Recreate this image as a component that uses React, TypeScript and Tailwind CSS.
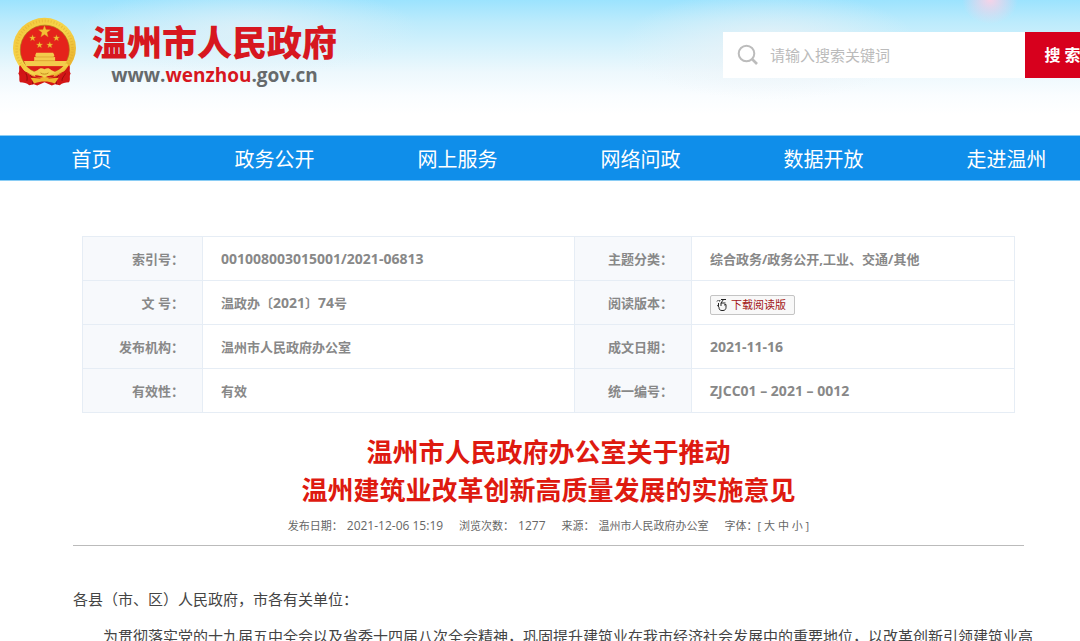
import React from "react";

const navItems = ["首页", "政务公开", "网上服务", "网络问政", "数据开放", "走进温州"];

function Emblem() {
  const star = (cx: number, cy: number, r: number) =>
    Array.from({ length: 10 }, (_, i) => {
      const a = -Math.PI / 2 + (i * Math.PI) / 5;
      const d = i % 2 ? r * 0.42 : r;
      return `${(cx + d * Math.cos(a)).toFixed(1)},${(cy + d * Math.sin(a)).toFixed(1)}`;
    }).join(" ");
  return (
    <svg viewBox="36 20 196 210" className="h-[70px] w-[65px] shrink-0" role="img" aria-label="国徽">
      <defs>
        <linearGradient id="gold" x1="0" y1="0" x2="1" y2="1">
          <stop offset="0" stopColor="#f3c53a" />
          <stop offset="0.5" stopColor="#f6d64c" />
          <stop offset="1" stopColor="#e6a524" />
        </linearGradient>
      </defs>
      <path
        d="M60 162c10 4 20 10 30 16l44 16 44-16c10-6 20-12 30-16 5 9-1 19 5 28-6 7 1 18-5 26-12 1-20 2-28 9l-14-3-10 4-22-10-22 10-10-4-14 3c-8-7-16-8-28-9-4-8 1-19-5-26 6-9 0-19 5-28z"
        fill="#d31616"
      />
      <path d="M73 184c8 8 10 16 8 28M195 184c8 8-10 16-8 28M90 192c8 10 10 18 8 30M178 192c-8 10-10 18-8 30" fill="none" stroke="#920c0c" strokeWidth="3" />
      <ellipse cx="134" cy="113" rx="95" ry="91" fill="url(#gold)" />
      <circle cx="134" cy="115" r="84" fill="none" stroke="#dca52a" strokeWidth="8" strokeDasharray="3 6" opacity="0.45" />
      <circle cx="135" cy="118" r="74" fill="#e5231b" stroke="#a9781a" strokeWidth="2" />
      <g fill="#f5bf35" stroke="#c98a1c" strokeWidth="1">
        <polygon points={star(134, 64, 19)} />
        <polygon points={star(98, 83, 10)} />
        <polygon points={star(170, 83, 10)} />
        <polygon points={star(119, 104, 10)} />
        <polygon points={star(150, 104, 10)} />
      </g>
      <path d="M109 127h51l4 8-3 5h5v12h36l-8 17H79l-7-17h31v-12h5l-2-5z" fill="#f3cb4c" />
      <path d="M106 140h58M104 151h62" stroke="#d69a2a" strokeWidth="2" />
      <path d="M79 168h112l-18 11h-18l-20-5-20 5H96z" fill="#d91d18" />
      <path d="M60 164c-3 8 0 18 3 24l22 2 28 12h42l28-12 22-2c3-6 6-16 3-24l-14 20-34 11-26 4-26-4-34-11z" fill="#cf1515" />
      <path d="M68 160c12 14 26 24 44 28l-8 10c-18-7-31-18-42-33zM200 160c-12 14-26 24-44 28l8 10c18-7 31-18 42-33z" fill="url(#gold)" />
      <path d="M92 203l28 2 14-6 14 6 29-2-12 17c-12-4-20-6-31-6s-19 2-31 6z" fill="#edb62f" />
      <path d="M114 179c6-7 14-6 20-2 6-4 14-5 20 2l14 7-18 9-16 7-16-7-18-9z" fill="#f3ce4d" />
      <path d="M122 188c6 5 18 5 24 0" fill="none" stroke="#c48a1d" strokeWidth="3" />
    </svg>
  );
}

function Num({ children }: { children: React.ReactNode }) {
  return <span className="text-[14px]">{children}</span>;
}

function DownloadButton() {
  return (
    <button
      type="button"
      className="mt-1 flex h-5 w-[85px] items-center gap-1 rounded-xs border border-[#c4c4c4] bg-[#f8f8f8] pl-[5px] text-[11px] font-normal whitespace-nowrap text-[#a31515]"
    >
      <svg viewBox="0 0 11 13" className="h-[13px] w-[11px] shrink-0" fill="none" stroke="#222" strokeWidth="1" aria-hidden="true">
        <path d="M1 3.500 2.500 2M4 2l-.5 1.500M5 1.500h5M7.500 1.500 5 5h4.500M2.500 5v3M1.500 7l1.500 2.500c0 2 1 3 3 3h1c2 0 3-1.500 3-3V6.500L8 7M5 5v3" />
      </svg>
      下载阅读版
    </button>
  );
}

const rows: [string, React.ReactNode, string, React.ReactNode][] = [
  ["索引号：", <Num>001008003015001/2021-06813</Num>, "主题分类：", "综合政务/政务公开,工业、交通/其他"],
  ["文 号：", <>温政办〔<Num>2021</Num>〕<Num>74</Num>号</>, "阅读版本：", <DownloadButton />],
  ["发布机构：", "温州市人民政府办公室", "成文日期：", <Num>2021-11-16</Num>],
  ["有效性：", "有效", "统一编号：", <Num>ZJCC01 – 2021 – 0012</Num>],
];

export default function App() {
  const label = "border border-[#e6edf5] bg-[#f7f9fc] pr-[18px] text-right font-bold";
  const value = "border border-[#e6edf5] pl-[18px] text-left font-bold";
  return (
    <div className="h-screen w-full overflow-hidden bg-white font-['Open_Sans','Noto_Sans_CJK_SC',sans-serif] text-[#444]">
      <header className="flex h-[135px] items-start justify-between bg-[radial-gradient(ellipse_28px_24px_at_990px_0px,#f6d3e8_0%,transparent_100%),radial-gradient(ellipse_150px_55px_at_770px_45px,#edf2f6cc_0%,transparent_100%),radial-gradient(ellipse_170px_45px_at_250px_30px,#e2f1f8cc_0%,transparent_100%),linear-gradient(180deg,#9ce3fe_0px,#bcebfc_22px,#d6f2fc_48px,#edf8fd_72px,#fafdff_96px,#ffffff_115px)]">
        <a href="#" className="flex shrink-0 items-start gap-[15px] pt-[17px] pl-3">
          <Emblem />
          <span className="flex flex-col items-center whitespace-nowrap">
            <span className="text-[35px] leading-[52px] font-black text-[#d7171f]">温州市人民政府</span>
            <span className="text-[19px] leading-3 font-bold text-[#666a6c]">
              www.<span className="text-[#d7171f]">wenzhou</span>.gov.cn
            </span>
          </span>
        </a>
        <form className="mt-8 -mr-5 flex h-[46px] shrink-0" onSubmit={(e) => e.preventDefault()}>
          <div className="flex w-[302px] items-center gap-[11px] bg-white pl-[14px]">
            <svg viewBox="0 0 22 22" className="size-[22px] shrink-0" fill="none" stroke="#bcbcbc" strokeWidth="2" aria-hidden="true">
              <circle cx="9.500" cy="9.500" r="7.800" />
              <path d="m15 15 5 5" strokeWidth="2.600" />
            </svg>
            <input
              type="text"
              aria-label="搜索关键词"
              placeholder="请输入搜索关键词"
              className="w-full min-w-0 bg-transparent text-[15px] text-[#444] outline-none placeholder:text-[#bbb]"
            />
          </div>
          <button type="submit" className="w-[75px] bg-[#d7001d] text-[16px] font-bold whitespace-nowrap text-white">
            搜 索
          </button>
        </form>
      </header>

      <nav className="flex h-[46px] items-center overflow-hidden border-y border-[#8acdf5] bg-[#0f8eea] pt-1">
        {navItems.map((t) => (
          <a key={t} href="#" className="w-[183px] shrink-0 text-center text-[20px] leading-10 text-white">
            {t}
          </a>
        ))}
      </nav>

      <main className="pt-[55px] pr-14 pl-[73px]">
        <table className="mr-[9px] ml-[9px] w-[calc(100%-18px)] table-fixed border-collapse text-[13px] leading-5 text-[#888]">
          <colgroup>
            <col className="w-[120px]" />
            <col />
            <col className="w-[117px]" />
            <col className="w-[323px]" />
          </colgroup>
          <tbody>
            {rows.map(([a, b, c, d]) => (
              <tr key={a} className="h-11">
                <th scope="row" className={label}>{a}</th>
                <td className={value}>{b}</td>
                <th scope="row" className={label}>{c}</th>
                <td className={value}>{d}</td>
              </tr>
            ))}
          </tbody>
        </table>

        <h1 className="mt-5 text-center text-[26px] leading-[38px] font-bold text-[#de1a10]">
          温州市人民政府办公室关于推动
          <br />
          温州建筑业改革创新高质量发展的实施意见
        </h1>
        <div className="flex justify-center gap-4 border-b border-[#bbb] pt-[5px] pb-[7px] text-[11px] leading-6 whitespace-nowrap text-[#666]">
          <span className="flex gap-1">发布日期：<span className="text-[12px]">2021-12-06 15:19</span></span>
          <span className="flex gap-1">浏览次数：<span className="text-[12px]">1277</span></span>
          <span className="flex gap-1">来源：<span>温州市人民政府办公室</span></span>
          <span>
            字体：[ <a href="#">大</a> <a href="#">中</a> <a href="#">小</a> ]
          </span>
        </div>
        <article className="pt-[35px] text-[15px] leading-[37px] whitespace-nowrap text-[#444]">
          <p>各县（市、区）人民政府，市各有关单位：</p>
          <p className="indent-[2em]">
            为贯彻落实党的十九届五中全会以及省委十四届八次全会精神，巩固提升建筑业在我市经济社会发展中的重要地位，以改革创新引领建筑业高
          </p>
        </article>
      </main>
    </div>
  );
}
